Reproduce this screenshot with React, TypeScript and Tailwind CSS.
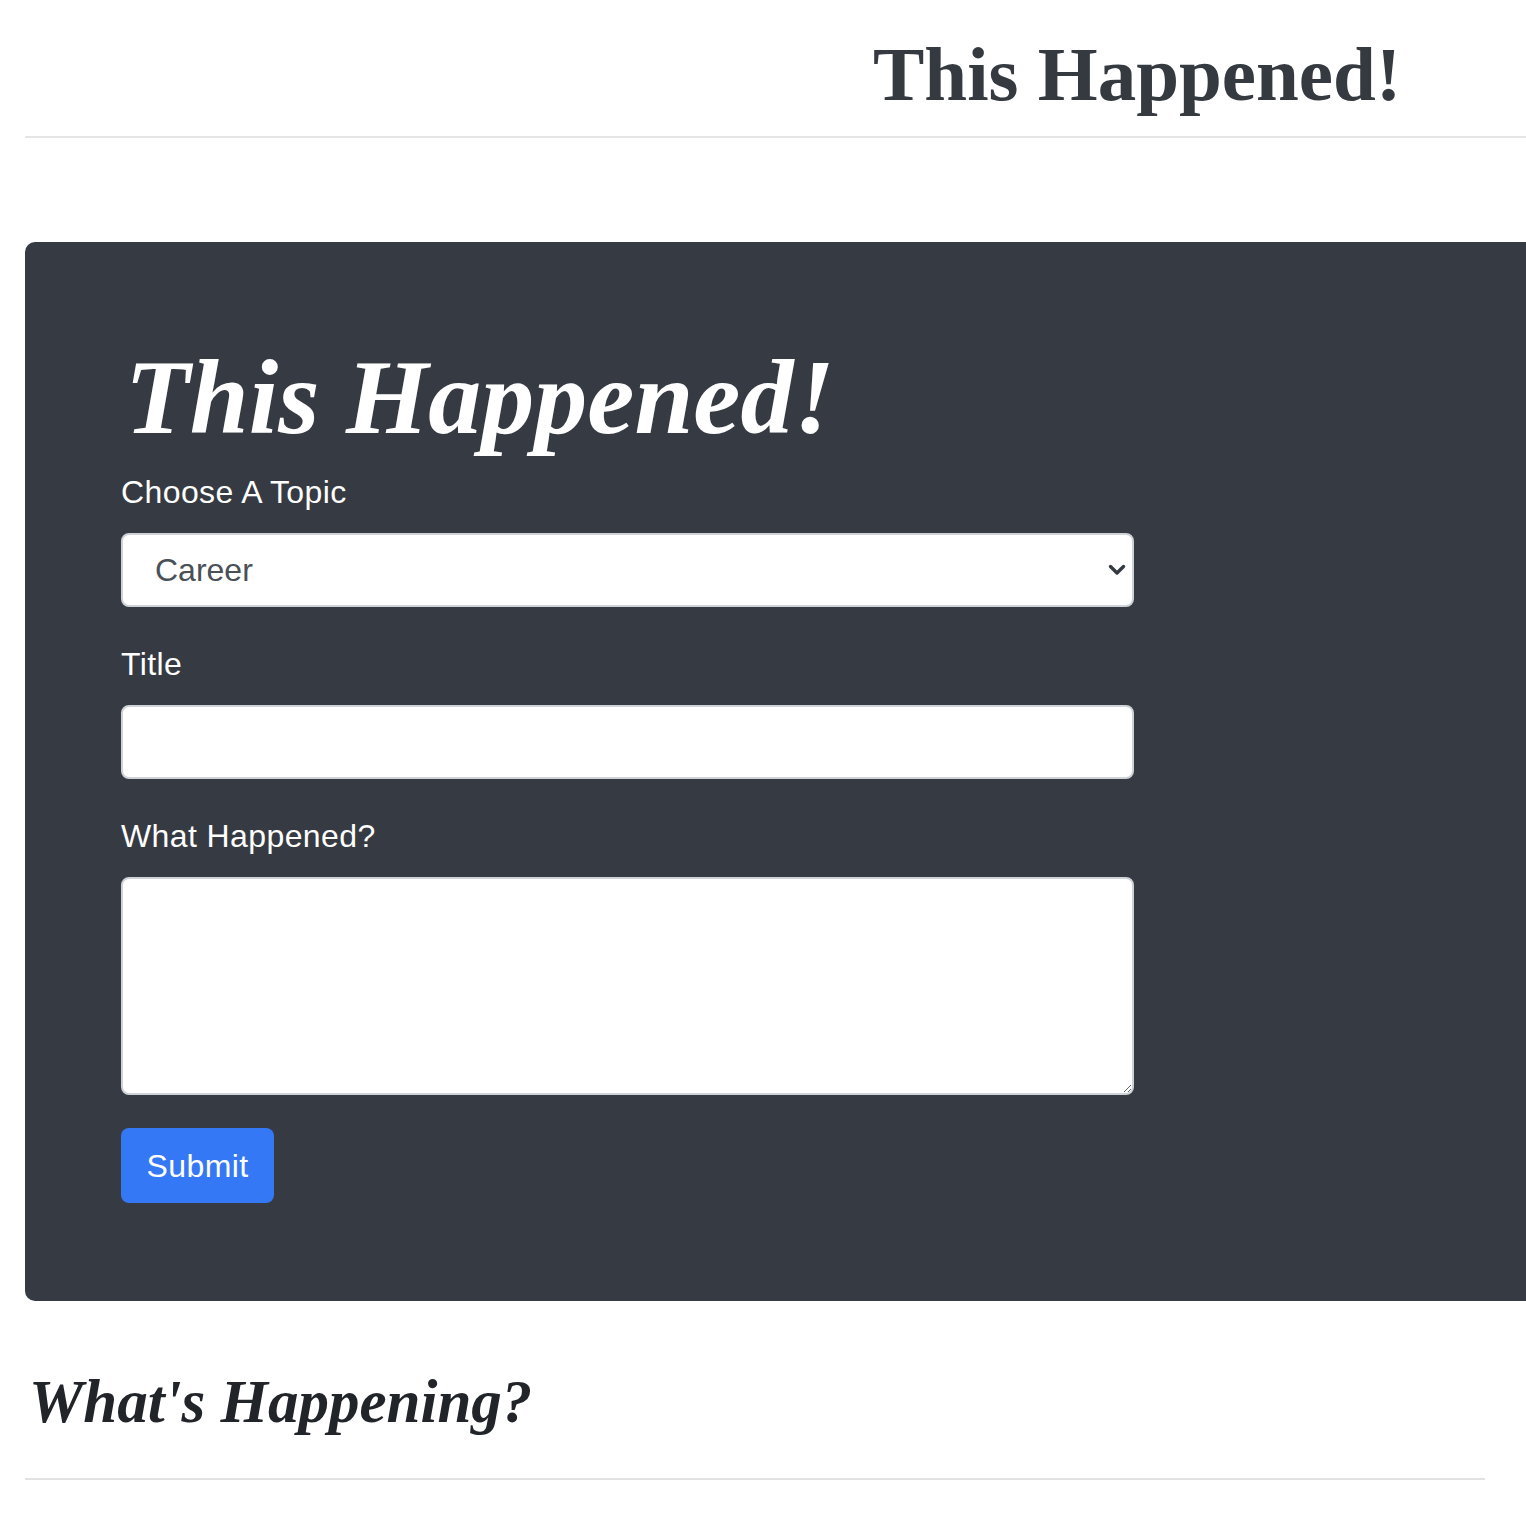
import React from "react";

const serif = "font-['Liberation_Serif',_'DejaVu_Serif',_serif]";
const sans = "font-['Liberation_Sans',_Arial,_sans-serif]";

const Label: React.FC<{ text: string; first?: boolean }> = ({ text, first }) => (
  <label
    className={`block text-[32px] leading-[46px] tracking-[0.4px] text-white mb-[18px] ${
      first ? "mt-[19px]" : ""
    }`}
  >
    {text}
  </label>
);

const App: React.FC = () => {
  const [topic, setTopic] = React.useState("Career");

  return (
    <div className={`w-full min-h-screen bg-white overflow-hidden ${sans}`}>
      {/* Header */}
      <header className="ml-[25px] w-[1530px] border-b-2 border-[#e6e6e6] pt-[36px] pb-[23px]">
        <h1
          className={`pl-[848px] text-[77px] leading-none font-bold text-[#343a40] whitespace-nowrap ${serif}`}
        >
          This Happened!
        </h1>
      </header>

      {/* Form panel */}
      <section className="ml-[25px] mt-[104px] w-[1540px] bg-[#363a42] rounded-l-[10px] pt-[104px] pb-[98px] pl-[96px]">
        <h2
          className={`ml-[4px] text-[106px] leading-[104px] font-bold italic text-white whitespace-nowrap ${serif}`}
        >
          This Happened!
        </h2>

        <form className="w-[1013px]" onSubmit={(e) => e.preventDefault()}>
          <Label text="Choose A Topic" first />
          <div className="relative mb-[34px]">
            <select
              value={topic}
              onChange={(e) => setTopic(e.target.value)}
              className="appearance-none block w-full h-[74px] bg-white border-2 border-[#cfd3d8] rounded-[8px] pl-[32px] text-[32px] text-[#495057] outline-none"
            >
              <option>Career</option>
              <option>Family</option>
              <option>Health</option>
              <option>Relationships</option>
            </select>
            <svg
              className="absolute right-[8px] top-[30px] pointer-events-none"
              width="18"
              height="14"
              viewBox="0 0 18 14"
              fill="none"
            >
              <path
                d="M2.5 3.5 L9 10 L15.5 3.5"
                stroke="#343a40"
                strokeWidth="3.4"
                strokeLinecap="round"
                strokeLinejoin="round"
              />
            </svg>
          </div>

          <Label text="Title" />
          <input
            type="text"
            className="block w-full h-[74px] bg-white border-2 border-[#cfd3d8] rounded-[8px] px-[32px] text-[32px] text-[#495057] outline-none mb-[34px]"
          />

          <Label text="What Happened?" />
          <textarea className="block w-full h-[218px] bg-white border-2 border-[#cfd3d8] rounded-[8px] px-[32px] py-[12px] text-[32px] text-[#495057] outline-none" />

          <button
            type="submit"
            className="mt-[33px] h-[75px] w-[153px] bg-[#3478f6] text-white text-[32px] tracking-[0.4px] rounded-[8px] flex items-center justify-center"
          >
            Submit
          </button>
        </form>
      </section>

      {/* Feed */}
      <section className="ml-[25px] w-[1460px]">
        <h3
          className={`mt-[70px] pl-[4px] text-[61px] leading-none font-bold italic text-[#212529] whitespace-nowrap ${serif}`}
        >
          What's Happening?
        </h3>
        <hr className="mt-[46px] border-0 h-[2px] bg-[#e2e2e2]" />
      </section>
    </div>
  );
};

export default App;
